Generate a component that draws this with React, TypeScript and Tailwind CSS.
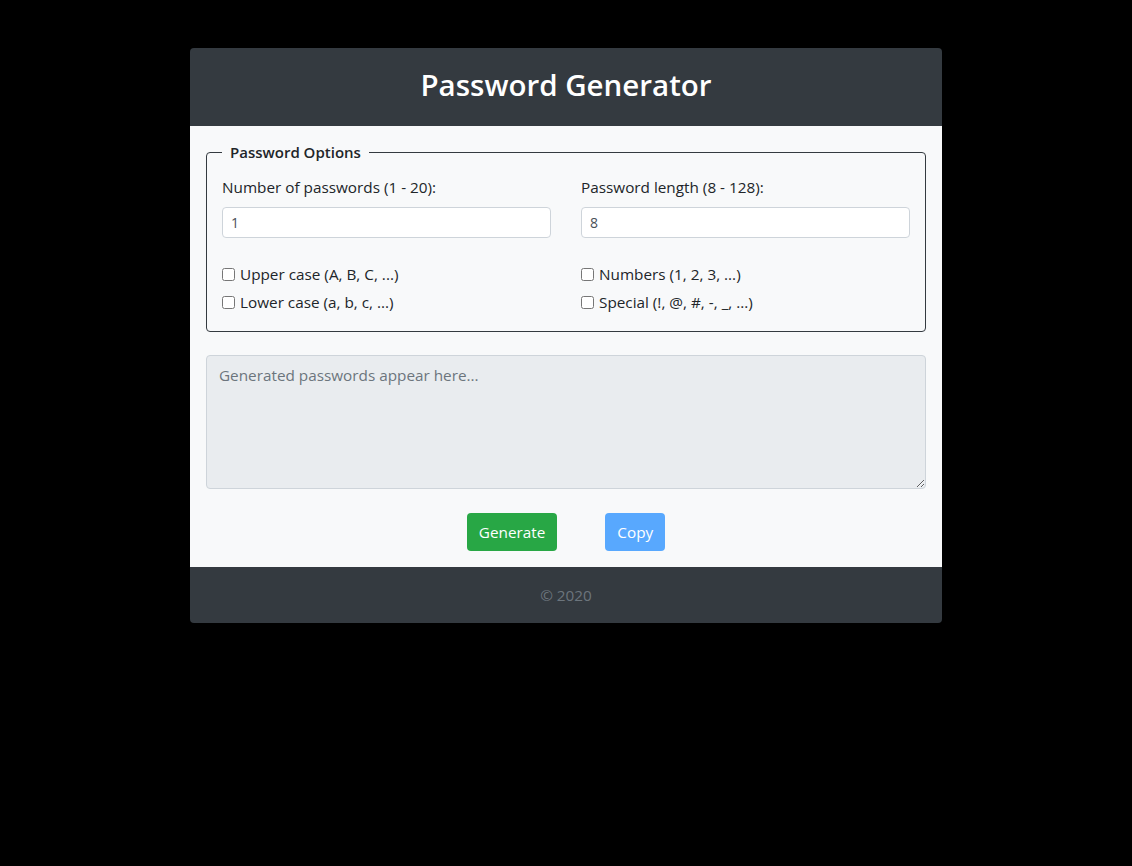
import React from "react";

export default function App() {
  const font = { fontFamily: '"Open Sans", "Noto Sans", sans-serif' };
  return (
    <div className="min-h-[866px] w-full bg-black pt-12" style={font}>
      <div className="mx-auto w-[752px] overflow-hidden rounded-[4px]">
        <header className="flex h-[78px] items-center justify-center bg-[#343a40]">
          <h1 className="-mt-[4px] text-[29.5px] font-semibold leading-none text-white">Password Generator</h1>
        </header>
        <main className="bg-[#f8f9fa] px-4 pt-[14px] pb-4 text-[#212529]">
          <fieldset className="rounded-[4px] border border-[#343a40] px-[15px] pb-[17px] pt-[11px]">
            <legend className="px-2 text-[15px] font-semibold leading-6">Password Options</legend>
            <div className="grid grid-cols-2 gap-x-[30px]">
              <div>
                <label className="mb-2 block text-[15.3px] leading-6">Number of passwords (1 - 20):</label>
                <input
                  type="text"
                  defaultValue="1"
                  className="h-[31px] w-full rounded-[4px] border border-[#ced4da] bg-white px-2 text-[14px] text-[#495057] outline-none"
                />
              </div>
              <div>
                <label className="mb-2 block text-[15.3px] leading-6">Password length (8 - 128):</label>
                <input
                  type="text"
                  defaultValue="8"
                  className="h-[31px] w-full rounded-[4px] border border-[#ced4da] bg-white px-2 text-[14px] text-[#495057] outline-none"
                />
              </div>
              <div className="mt-6 flex flex-col gap-1">
                <label className="flex items-center gap-[5px] text-[15.3px] leading-6">
                  <input type="checkbox" className="h-[13px] w-[13px]" />
                  Upper case (A, B, C, ...)
                </label>
                <label className="flex items-center gap-[5px] text-[15.3px] leading-6">
                  <input type="checkbox" className="h-[13px] w-[13px]" />
                  Lower case (a, b, c, ...)
                </label>
              </div>
              <div className="mt-6 flex flex-col gap-1">
                <label className="flex items-center gap-[5px] text-[15.3px] leading-6">
                  <input type="checkbox" className="h-[13px] w-[13px]" />
                  Numbers (1, 2, 3, ...)
                </label>
                <label className="flex items-center gap-[5px] text-[15.3px] leading-6">
                  <input type="checkbox" className="h-[13px] w-[13px]" />
                  Special (!, @, #, -, _, ...)
                </label>
              </div>
            </div>
          </fieldset>
          <textarea
            readOnly
            placeholder="Generated passwords appear here..."
            className="mt-[23px] block h-[134px] w-full rounded-[4px] border border-[#ced4da] bg-[#e9ecef] px-3 py-[7px] text-[15.3px] leading-6 text-[#495057] outline-none placeholder:text-[#6c757d]"
          />
          <div className="mt-6 flex justify-center gap-12">
            <button className="h-[38px] rounded-[4px] bg-[#28a745] px-3 text-[15.3px] text-white">Generate</button>
            <button className="h-[38px] rounded-[4px] bg-[#58a8fe] px-3 text-[15.3px] text-white">Copy</button>
          </div>
        </main>
        <footer className="flex h-[56px] items-center justify-center bg-[#343a40] text-[15.3px] text-[#6c757d]">
          © 2020
        </footer>
      </div>
    </div>
  );
}
